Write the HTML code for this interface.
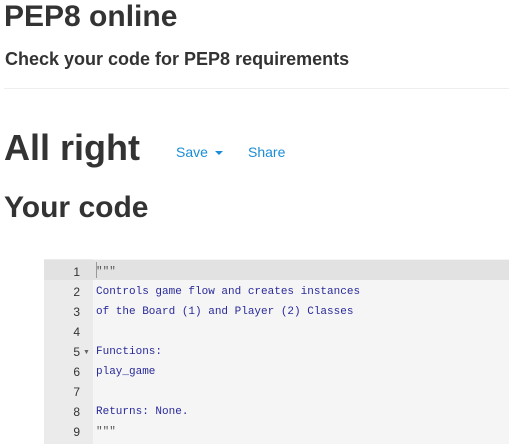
<!DOCTYPE html>
<html><head><style>
body{margin:0;width:509px;height:444px;overflow:hidden;background:#fff;font-family:"Liberation Sans",sans-serif;color:#333}
.a{position:absolute;white-space:nowrap;font-weight:bold}
#ed{position:absolute;left:44px;top:259px;width:465px;height:185px;background:#f5f5f5}
#g{position:absolute;left:0;top:0;width:49px;height:185px;background:#ebebeb}
.ln{position:absolute;left:0;width:465px;height:20px;font:11px/20px "Liberation Mono",monospace}
.n{position:absolute;left:0;width:36px;text-align:right;color:#333;font:12px/20px "Liberation Sans",sans-serif}
.c{position:absolute;left:52px;color:#2a2a9a}
</style></head><body>
<div class="a" style="left:4px;top:0px;font-size:30px">PEP8 online</div>
<div class="a" style="left:5px;top:49px;font-size:18px">Check your code for PEP8 requirements</div>
<div style="position:absolute;left:4px;top:88px;width:505px;height:1px;background:#eee"></div>
<div class="a" style="left:4px;top:127px;font-size:36px">All right</div>
<div style="position:absolute;left:176px;top:144px;font-size:14px;color:#1a8dd6">Save <span style="display:inline-block;width:0;height:0;border-left:4px solid transparent;border-right:4px solid transparent;border-top:4px solid #1a8dd6;vertical-align:middle;margin-left:3px"></span></div>
<div style="position:absolute;left:248px;top:144px;font-size:14px;color:#1a8dd6">Share</div>
<div class="a" style="left:4px;top:191px;font-size:30px">Your code</div>
<div id="ed"><div id="g"></div>
<div style="position:absolute;left:0;top:1px;width:465px;height:20px;background:#e2e2e2"></div>
<div style="position:absolute;left:52px;top:3px;width:1px;height:16px;background:#999"></div>
<div class="ln" style="top:3px"><span class="n">1</span><span class="c" style="color:#555">"""</span></div>
<div class="ln" style="top:23px"><span class="n">2</span><span class="c">Controls game flow and creates instances</span></div>
<div class="ln" style="top:43px"><span class="n">3</span><span class="c">of the Board (1) and Player (2) Classes</span></div>
<div class="ln" style="top:63px"><span class="n">4</span></div>
<div class="ln" style="top:83px"><span class="n">5<span style="font-size:7px;color:#666;position:absolute;left:39px;top:1px">▼</span></span><span class="c">Functions:</span></div>
<div class="ln" style="top:103px"><span class="n">6</span><span class="c">play_game</span></div>
<div class="ln" style="top:123px"><span class="n">7</span></div>
<div class="ln" style="top:143px"><span class="n">8</span><span class="c">Returns: None.</span></div>
<div class="ln" style="top:163px"><span class="n">9</span><span class="c" style="color:#555">"""</span></div>
</div>
</body></html>
